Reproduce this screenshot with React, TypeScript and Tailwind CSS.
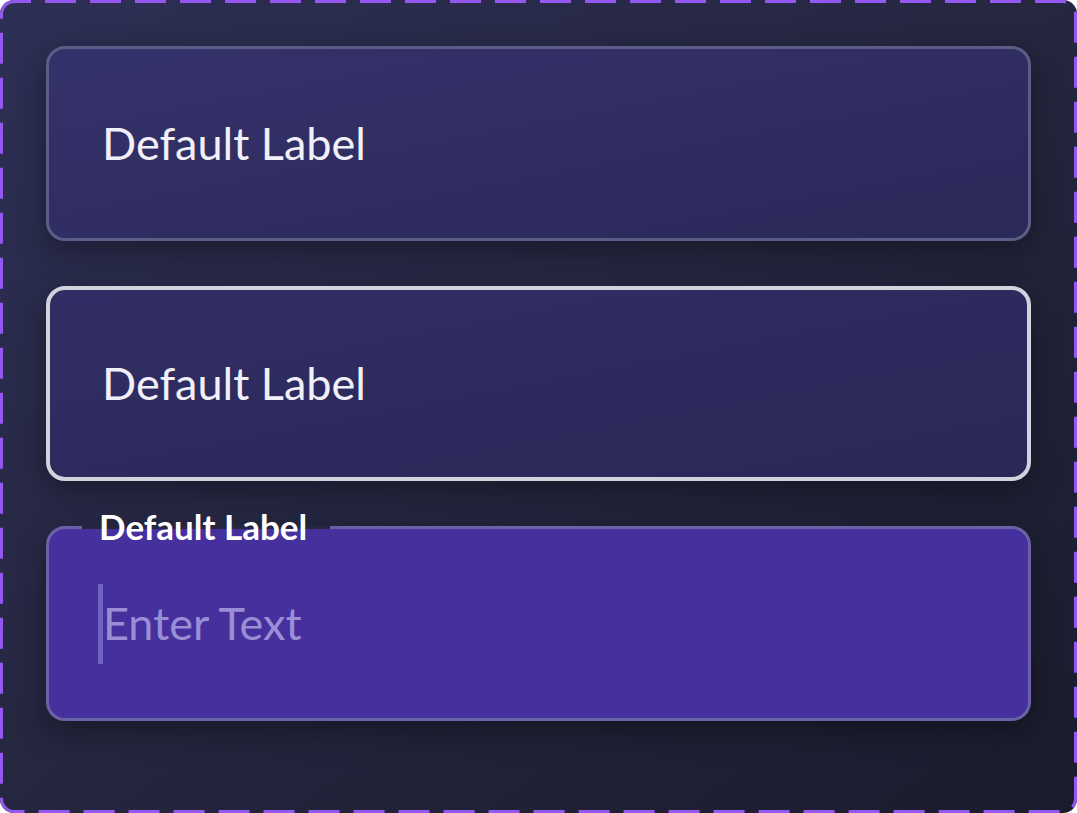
export default function App() {
  return (
    <div className="h-screen w-full bg-white">
      <div className="relative h-[813px] w-full rounded-[14px] bg-gradient-to-br from-[#2d2f55] via-[#25263f] to-[#1a1b2c] p-[46px] font-['Lato',sans-serif]">
        {/* dashed outline */}
        <svg className="pointer-events-none absolute inset-0" width="1077" height="813" viewBox="0 0 1077 813">
          <rect
            x="1.5"
            y="1.5"
            width="1074"
            height="810"
            rx="13"
            fill="none"
            stroke="#9457f0"
            strokeWidth="3"
            strokeDasharray="31 14"
            strokeDashoffset="14.5"
          />
        </svg>

        <div className="flex flex-col gap-[45px]">
          <div className="flex h-[195px] items-center rounded-[19px] border-[3px] border-[#5b5d87] bg-gradient-to-br from-[#34326a] to-[#2b2959] pl-[53px] shadow-[0_10px_30px_rgba(0,0,0,0.35)]">
            <span className="text-[45px] text-[#f1f0f8]">Default Label</span>
          </div>

          <div className="flex h-[195px] items-center rounded-[19px] border-[4px] border-[#d3d3de] bg-gradient-to-br from-[#302e64] to-[#2a2857] pl-[52px] shadow-[0_10px_30px_rgba(0,0,0,0.35)]">
            <span className="text-[45px] text-[#f1f0f8]">Default Label</span>
          </div>

          <div className="relative flex h-[195px] items-center rounded-[19px] border-[3px] border-[#6a62a6] bg-[#46309d] pl-[49px] shadow-[0_10px_30px_rgba(0,0,0,0.35)]">
            <div className="absolute left-[33px] top-[-3px] h-[3px] w-[248px] bg-[#25263f]" />
            <span className="absolute left-[50px] top-[-23px] text-[35px] font-bold leading-[40px] text-white">Default Label</span>
            <div className="flex items-center">
              <div className="h-[80px] w-[5px] bg-[#6f62c2]" />
              <span className="text-[45px] text-[#9a8fd6]">Enter Text</span>
            </div>
          </div>
        </div>
      </div>
    </div>
  );
}
